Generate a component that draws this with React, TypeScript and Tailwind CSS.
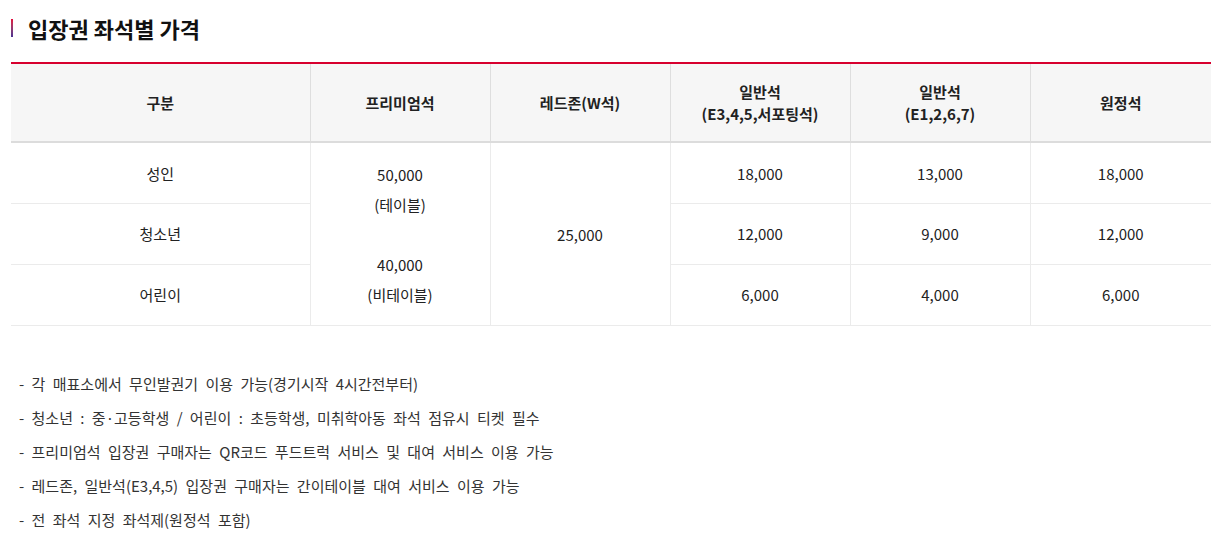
const FONT = { fontFamily: '"Noto Sans CJK KR", "Noto Sans", sans-serif' };

const headers = ['구분', '프리미엄석', '레드존(W석)', '일반석\n(E3,4,5,서포팅석)', '일반석\n(E1,2,6,7)', '원정석'];

const rows = [
  { label: '성인', e345: '18,000', e1267: '13,000', away: '18,000' },
  { label: '청소년', e345: '12,000', e1267: '9,000', away: '12,000' },
  { label: '어린이', e345: '6,000', e1267: '4,000', away: '6,000' },
];

const notes = [
  '- 각 매표소에서 무인발권기 이용 가능(경기시작 4시간전부터)',
  '- 청소년 : 중·고등학생 / 어린이 : 초등학생, 미취학아동 좌석 점유시 티켓 필수',
  '- 프리미엄석 입장권 구매자는 QR코드 푸드트럭 서비스 및 대여 서비스 이용 가능',
  '- 레드존, 일반석(E3,4,5) 입장권 구매자는 간이테이블 대여 서비스 이용 가능',
  '- 전 좌석 지정 좌석제(원정석 포함)',
];

export default function App() {
  return (
    <div className="min-h-[544px] bg-white px-[11px] text-[#222]" style={FONT}>
      <div className="flex items-center pt-[15px]">
        <span className="h-[18px] w-[2px] bg-gradient-to-b from-[#e4003a] to-[#4b2f91]" />
        <h2 className="ml-[15px] text-[22px] font-bold leading-[26px] text-[#111]">입장권 좌석별 가격</h2>
      </div>

      <table className="mt-[21px] w-[1200px] table-fixed border-collapse border-t-2 border-[#d7002e] text-center text-[15px]">
        <colgroup>
          <col className="w-[299px]" />
          <col className="w-[180px]" />
          <col className="w-[180px]" />
          <col className="w-[180px]" />
          <col className="w-[180px]" />
          <col className="w-[181px]" />
        </colgroup>
        <thead>
          <tr className="h-[79px] border-b-2 border-[#dcdcdc] bg-[#f6f6f6]">
            {headers.map((h, i) => (
              <th
                key={h}
                className={`whitespace-pre-line text-[15px] font-bold leading-[22px] text-[#222] ${i > 0 ? 'border-l border-[#dedede]' : ''}`}
              >
                {h}
              </th>
            ))}
          </tr>
        </thead>
        <tbody>
          {rows.map((r, i) => (
            <tr key={r.label} className="h-[61px] border-b border-[#ebebeb] pt-px">
              <td className="pt-[2px] text-[#222]">{r.label}</td>
              {i === 0 ? (
                <>
                  <td rowSpan={3} className="border-l border-[#ebebeb] pt-[2px] leading-[30px]">
                    50,000
                    <br />
                    (테이블)
                    <br />
                    <br />
                    40,000
                    <br />
                    (비테이블)
                  </td>
                  <td rowSpan={3} className="border-l border-[#ebebeb] pt-[2px]">
                    25,000
                  </td>
                </>
              ) : null}
              <td className="border-l border-[#ebebeb] pt-[2px]">{r.e345}</td>
              <td className="border-l border-[#ebebeb] pt-[2px]">{r.e1267}</td>
              <td className="border-l border-[#ebebeb] pt-[2px]">{r.away}</td>
            </tr>
          ))}
        </tbody>
      </table>

      <ul className="mt-[41px] pl-[8px] text-[15px] leading-[34px] text-[#333] [word-spacing:4px]">
        {notes.map((n) => (
          <li key={n}>{n}</li>
        ))}
      </ul>
    </div>
  );
}
